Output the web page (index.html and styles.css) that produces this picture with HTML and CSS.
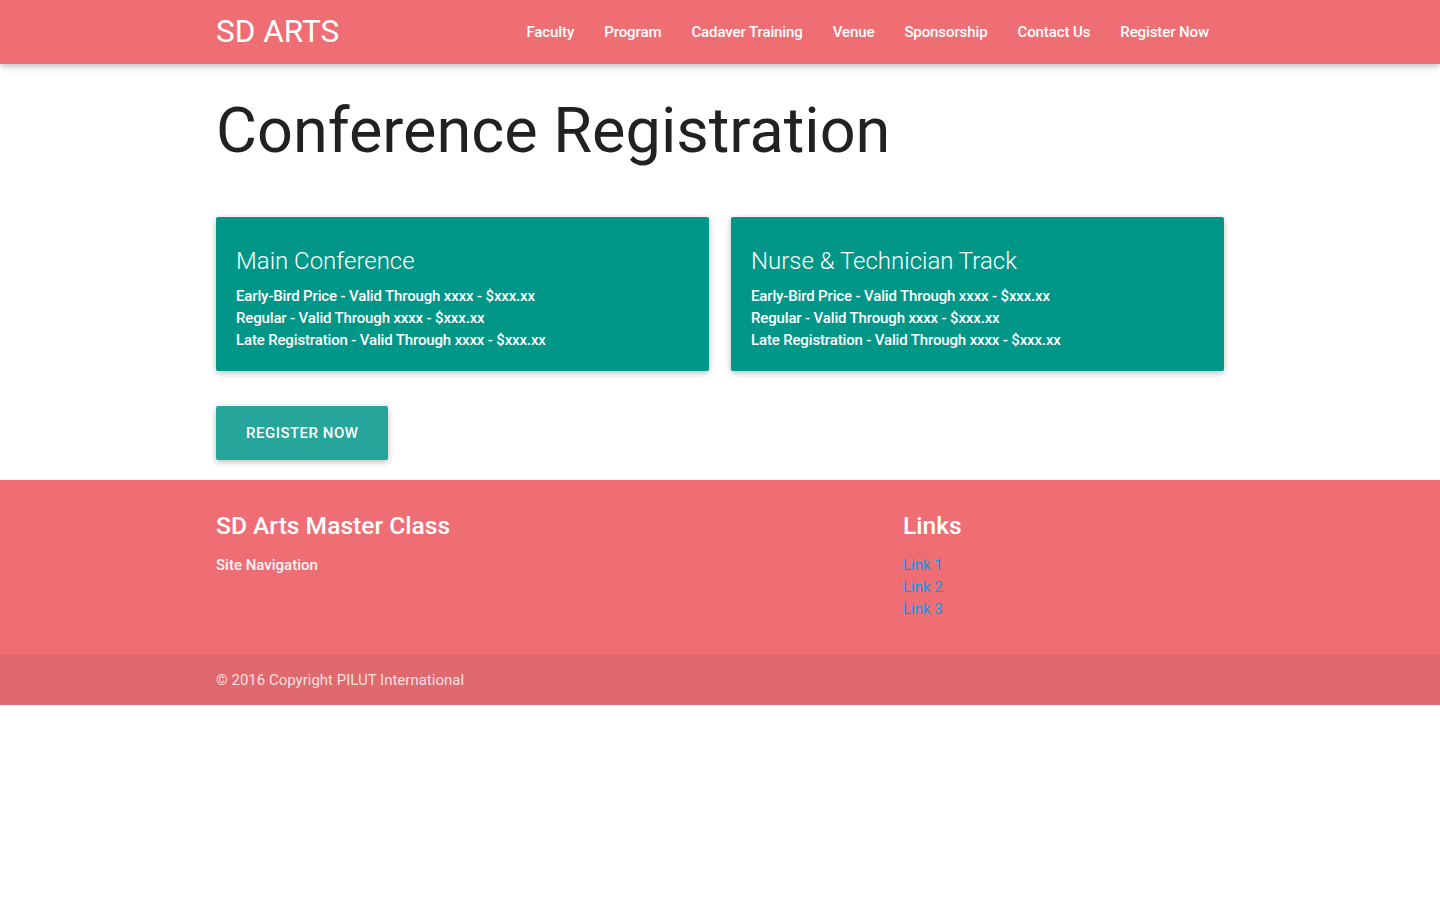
FILE: index.html
```html
<!DOCTYPE html>
<html lang="en">
<head>
<meta charset="utf-8">
<title>Conference Registration</title>
<link rel="stylesheet" href="styles.css">
</head>
<body>
<nav class="nav">
  <div class="container nav-inner">
    <a href="#" class="brand">SD ARTS</a>
    <ul class="nav-links">
      <li><a href="#">Faculty</a></li>
      <li><a href="#">Program</a></li>
      <li><a href="#">Cadaver Training</a></li>
      <li><a href="#">Venue</a></li>
      <li><a href="#">Sponsorship</a></li>
      <li><a href="#">Contact Us</a></li>
      <li><a href="#">Register Now</a></li>
    </ul>
  </div>
</nav>

<main class="container main">
  <h1 class="page-title">Conference Registration</h1>
  <div class="cards">
    <div class="card">
      <span class="card-title">Main Conference</span>
      <p class="card-line">Early-Bird Price - Valid Through xxxx - $xxx.xx</p>
      <p class="card-line">Regular - Valid Through xxxx - $xxx.xx</p>
      <p class="card-line">Late Registration - Valid Through xxxx - $xxx.xx</p>
    </div>
    <div class="card">
      <span class="card-title">Nurse &amp; Technician Track</span>
      <p class="card-line">Early-Bird Price - Valid Through xxxx - $xxx.xx</p>
      <p class="card-line">Regular - Valid Through xxxx - $xxx.xx</p>
      <p class="card-line">Late Registration - Valid Through xxxx - $xxx.xx</p>
    </div>
  </div>
  <div class="actions">
    <a href="#" class="btn-large">Register Now</a>
  </div>
</main>

<footer class="page-footer">
  <div class="container footer-grid">
    <div class="footer-col">
      <h5 class="footer-title">SD Arts Master Class</h5>
      <p class="footer-text">Site Navigation</p>
    </div>
    <div class="footer-col footer-links-col">
      <h5 class="footer-title">Links</h5>
      <ul class="footer-links">
        <li><a href="#">Link 1</a></li>
        <li><a href="#">Link 2</a></li>
        <li><a href="#">Link 3</a></li>
      </ul>
    </div>
  </div>
  <div class="footer-copyright">
    <div class="container">© 2016 Copyright PILUT International</div>
  </div>
</footer>
</body>
</html>
```

FILE: styles.css
```css
html {
  font-size: 15px;
}
body {
  margin: 0;
  font-family: Roboto, "Liberation Sans", sans-serif;
  font-weight: 400;
  line-height: 1.5;
  color: rgba(0, 0, 0, 0.87);
  background: #fff;
}
.container {
  width: 1008px;
  margin: 0 auto;
}
a {
  text-decoration: none;
}

/* NAV */
.nav {
  background: #ef6e74;
  height: 64px;
  box-shadow: 0 2px 5px 0 rgba(0,0,0,0.16), 0 2px 10px 0 rgba(0,0,0,0.12);
  position: relative;
  z-index: 2;
}
.nav-inner {
  display: flex;
  align-items: center;
  justify-content: space-between;
  height: 64px;
}
.brand {
  color: #fff;
  font-size: 31.5px;
  line-height: 64px;
}
.nav-links {
  display: flex;
  list-style: none;
  margin: 0;
  padding: 0;
}
.nav-links a {
  display: block;
  color: #fff;
  font-size: 15px;
  font-weight: 500;
  letter-spacing: -0.1px;
  line-height: 64px;
  padding: 0 15px;
}

/* MAIN */
.main {
  padding-top: 32px;
}
.page-title {
  font-size: 63px;
  font-weight: 400;
  line-height: 69px;
  margin: 0 0 52px;
  color: #212121;
}
.cards {
  display: grid;
  grid-template-columns: 1fr 1fr;
  gap: 22px;
  margin-bottom: 35px;
}
.card {
  background: #009688;
  color: #fff;
  border-radius: 2px;
  padding: 28px 20px 20px;
  box-shadow: 0 2px 5px 0 rgba(0,0,0,0.16), 0 2px 10px 0 rgba(0,0,0,0.12);
}
.card-title {
  display: block;
  font-size: 24px;
  font-weight: 300;
  line-height: 32px;
  margin-bottom: 8px;
}
.card-line {
  margin: 0;
  font-size: 15px;
  font-weight: 500;
  letter-spacing: -0.15px;
  line-height: 22px;
}
.actions {
  padding-bottom: 20px;
}
.btn-large {
  display: inline-block;
  background: #26a69a;
  color: #fff;
  height: 54px;
  line-height: 54px;
  padding: 0 30px;
  font-size: 15px;
  font-weight: 500;
  letter-spacing: 0.5px;
  text-transform: uppercase;
  border-radius: 2px;
  box-shadow: 0 2px 5px 0 rgba(0,0,0,0.16), 0 2px 10px 0 rgba(0,0,0,0.12);
}

/* FOOTER */
.page-footer {
  background: #ef6e74;
  padding-top: 20px;
}
.footer-grid {
  display: grid;
  grid-template-columns: 1fr 321px;
  padding-bottom: 1px;
}
.footer-title {
  margin: 12px 0 10px;
  font-size: 24.6px;
  font-weight: 500;
  line-height: 27px;
  color: #fff;
}
.footer-text {
  margin: 15px 0 0;
  font-size: 15px;
  font-weight: 500;
  line-height: 22px;
  color: #f5f5f5;
}
.footer-links {
  list-style: none;
  padding: 0;
  margin: 15px 0 34px;
}
.footer-links li {
  line-height: 22px;
  font-size: 15px;
}
.footer-links a {
  color: #039be5;
}
.footer-copyright {
  background: rgba(51, 51, 51, 0.08);
  height: 50px;
  line-height: 50px;
  font-size: 15px;
  color: rgba(255, 255, 255, 0.8);
}
```
